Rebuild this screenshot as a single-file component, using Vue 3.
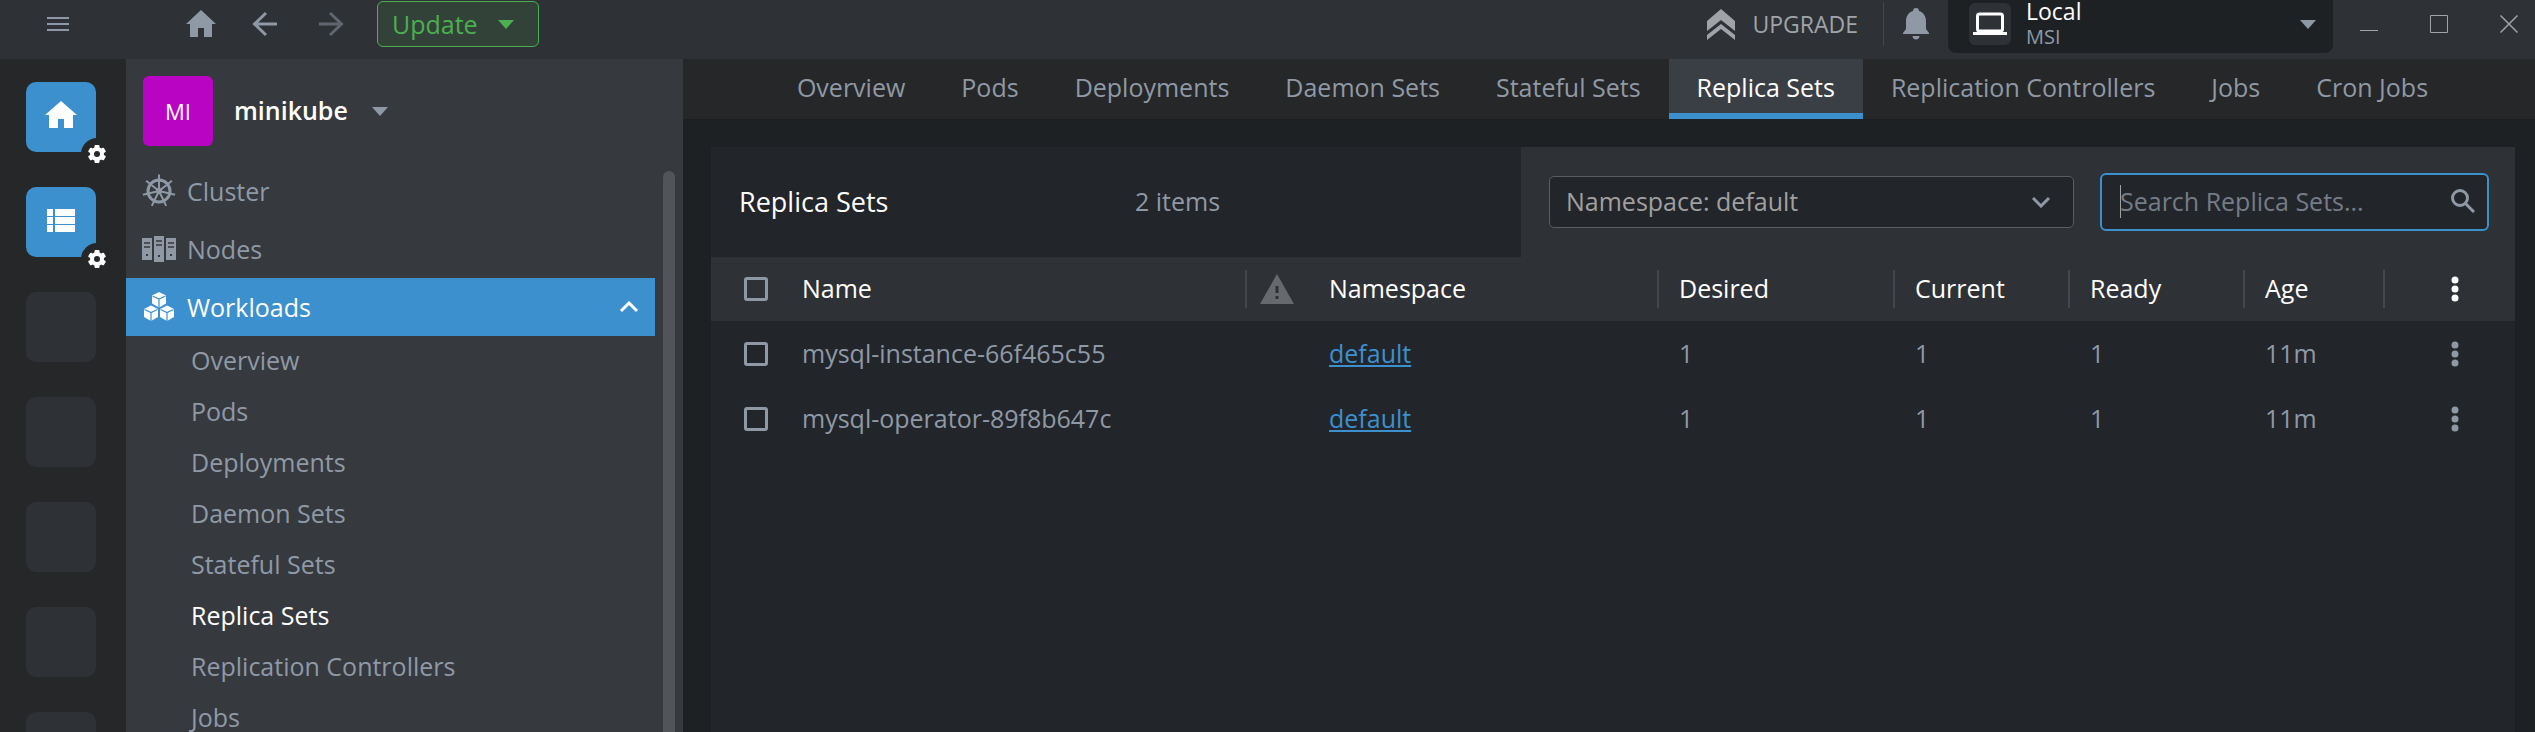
<script setup>
import { ref } from 'vue'

const query = ref('')
const namespace = ref('default')

const workloads = [
  'Overview',
  'Pods',
  'Deployments',
  'Daemon Sets',
  'Stateful Sets',
  'Replica Sets',
  'Replication Controllers',
  'Jobs',
  'Cron Jobs',
]
const active = 'Replica Sets'

const rows = [
  { name: 'mysql-instance-66f465c55', namespace: 'default', desired: 1, current: 1, ready: 1, age: '11m' },
  { name: 'mysql-operator-89f8b647c', namespace: 'default', desired: 1, current: 1, ready: 1, age: '11m' },
]

const spokes = Array.from({ length: 7 }, (_, i) => (i * 360) / 7)
const teeth = [0, 60, 120, 180, 240, 300]
</script>

<template>
  <div class="app">
    <header class="titlebar">
      <div class="bar-left">
        <button class="icon-btn menu-btn" aria-label="Menu">
          <svg width="22" height="16" viewBox="0 0 22 16"><path d="M0 2h22M0 8h22M0 14h22" stroke="currentColor" stroke-width="2" /></svg>
        </button>
        <button class="icon-btn home-btn" aria-label="Home">
          <svg width="32" height="28" viewBox="0 0 32 28"><path d="M16 0 1 14h4v13h8v-9h6v9h8V14h4z" fill="currentColor" /></svg>
        </button>
        <button class="icon-btn back-btn" aria-label="Back">
          <svg width="26" height="26" viewBox="0 0 26 26"><path d="M25 13H2M14 2 2.500 13 14 24" fill="none" stroke="currentColor" stroke-width="3" /></svg>
        </button>
        <button class="icon-btn forward-btn" aria-label="Forward" disabled>
          <svg width="26" height="26" viewBox="0 0 26 26"><path d="M1 13h23M12 2l11.500 11L12 24" fill="none" stroke="currentColor" stroke-width="3" /></svg>
        </button>
        <button class="update">
          Update
          <svg width="16" height="9" viewBox="0 0 16 9"><path d="M0 0h16L8 9z" fill="currentColor" /></svg>
        </button>
      </div>
      <div class="bar-right">
        <button class="upgrade">
          <svg width="30" height="32" viewBox="0 0 30 32">
            <path d="M15 1 29 13v10L15 12 1 23V13z M15 16l14 11v5L15 21 1 32v-5z" fill="currentColor" />
          </svg>
          UPGRADE
        </button>
        <button class="icon-btn bell" aria-label="Notifications">
          <svg width="26" height="32" viewBox="0 0 26 32">
            <path d="M13 0c2 0 3 1 3 3 4 1 7 5 7 10v8l3 4v1H0v-1l3-4v-8c0-5 3-9 7-10 0-2 1-3 3-3zM9.500 28h7c0 2-1.500 3.500-3.500 3.500S9.500 30 9.500 28z" fill="currentColor" />
          </svg>
        </button>
        <button class="space">
          <span class="space-icon">
            <svg width="34" height="24" viewBox="0 0 34 24">
              <rect x="4.500" y="2" width="25" height="17" rx="2" fill="none" stroke="#fff" stroke-width="3" />
              <path d="M0 20h34v3H0z" fill="#fff" />
            </svg>
          </span>
          <span class="space-text">
            <span class="space-name">Local</span>
            <span class="space-host">MSI</span>
          </span>
          <svg width="16" height="9" viewBox="0 0 16 9"><path d="M0 0h16L8 9z" fill="currentColor" /></svg>
        </button>
        <div class="window-controls">
          <button class="icon-btn" aria-label="Minimize">
            <svg width="18" height="18" viewBox="0 0 18 18"><path d="M0 15.500h18" stroke="currentColor" /></svg>
          </button>
          <button class="icon-btn" aria-label="Maximize">
            <svg width="18" height="18" viewBox="0 0 18 18"><path d="M.5.5h17v17H.5z" fill="none" stroke="currentColor" /></svg>
          </button>
          <button class="icon-btn" aria-label="Close">
            <svg width="18" height="18" viewBox="0 0 18 18"><path d="M.5.5l17 17M17.500.5l-17 17" stroke="currentColor" stroke-width="1.500" /></svg>
          </button>
        </div>
      </div>
    </header>

    <div class="body">
      <aside class="hotbar" aria-label="Hotbar">
        <div v-for="n in 7" :key="n" class="tile" :class="{ filled: n < 3 }">
          <svg v-if="n === 1" width="32" height="28" viewBox="0 0 32 28"><path d="M16 0 0 14h4v13h9v-9h6v9h9V14h4z" fill="#fff" /></svg>
          <svg v-if="n === 2" width="28" height="23" viewBox="0 0 28 23">
            <path d="M0 0h6v7H0zM8 0h20v7H8zM0 8h6v7H0zM8 8h20v7H8zM0 16h6v7H0zM8 16h20v7H8z" fill="#fff" />
          </svg>
          <span v-if="n < 3" class="gear">
            <svg width="18" height="18" viewBox="-9 -9 18 18">
              <rect v-for="a in teeth" :key="a" x="-2.500" y="-9" width="5" height="5" rx="1" fill="#fff" :transform="`rotate(${a})`" />
              <circle r="5" fill="none" stroke="#fff" stroke-width="4" />
            </svg>
          </span>
        </div>
      </aside>

      <nav class="sidebar" aria-label="Cluster">
        <button class="cluster-head">
          <span class="avatar">MI</span>
          <span class="cluster-name">minikube</span>
          <svg width="16" height="9" viewBox="0 0 16 9"><path d="M0 0h16L8 9z" fill="currentColor" /></svg>
        </button>
        <div class="scroll">
          <div class="tree">
            <a href="#" class="item">
              <svg width="34" height="34" viewBox="-17 -17 34 34">
                <circle r="11" fill="none" stroke="currentColor" stroke-width="3" />
                <circle r="3" fill="currentColor" />
                <path v-for="a in spokes" :key="a" d="M0 0V-16.500" stroke="currentColor" stroke-width="2" :transform="`rotate(${a})`" />
              </svg>
              Cluster
            </a>
            <a href="#" class="item">
              <svg width="34" height="26" viewBox="0 0 34 26">
                <path d="M0 2h10v22H0zM12 0h10v26H12zM24 2h10v22H24z" fill="currentColor" />
                <path d="M2 7h6M2 11h6M14 5h6M14 9h6M26 7h6M26 11h6" stroke="#36393e" stroke-width="1.500" />
                <path d="M4 18h2v2H4zM16 19h2v2h-2zM28 18h2v2h-2z" fill="#36393e" />
              </svg>
              Nodes
            </a>
            <a href="#" class="item open">
              <svg width="34" height="30" viewBox="-17 -15 34 30">
                <g v-for="(p, i) in [[0, -7.5], [-8, 6], [8, 6]]" :key="i" :transform="`translate(${p[0]} ${p[1]})`">
                  <path d="M0-7.500 7-4v8L0 8l-7-4v-8z" fill="#fff" />
                  <path d="M-6.500-3.500 0-.5l6.500-3M0-.5V8" fill="none" stroke="#3d90ce" stroke-width="1.200" />
                </g>
              </svg>
              Workloads
              <svg class="chevron" width="20" height="12" viewBox="0 0 20 12"><path d="M2 10l8-8 8 8" fill="none" stroke="#fff" stroke-width="3" /></svg>
            </a>
            <a v-for="w in workloads" :key="w" href="#" class="sub" :class="{ current: w === active }">{{ w }}</a>
          </div>
          <div class="scrollbar"></div>
        </div>
      </nav>

      <main class="main">
        <nav class="tabs" aria-label="Workloads">
          <a v-for="w in workloads" :key="w" href="#" class="tab" :class="{ current: w === active }">{{ w }}</a>
        </nav>
        <section class="panel">
          <div class="panel-head">
            <div class="panel-info">
              <h1>Replica Sets</h1>
              <span class="count">2 items</span>
            </div>
            <div class="filters">
              <div class="select-box">
                <select v-model="namespace" aria-label="Namespace">
                  <option value="default">Namespace: default</option>
                </select>
                <svg width="20" height="12" viewBox="0 0 20 12"><path d="M2 2l8 8 8-8" fill="none" stroke="currentColor" stroke-width="3" /></svg>
              </div>
              <label class="search">
                <span class="caret"></span>
                <input v-model="query" type="text" placeholder="Search Replica Sets..." aria-label="Search Replica Sets" />
                <svg width="24" height="24" viewBox="0 0 24 24">
                  <circle cx="9" cy="9" r="7.500" fill="none" stroke="currentColor" stroke-width="3" />
                  <path d="M14 14l9 9" stroke="currentColor" stroke-width="3" />
                </svg>
              </label>
            </div>
          </div>
          <table>
            <colgroup>
              <col class="c-check" />
              <col />
              <col class="c-warn" />
              <col class="c-ns" />
              <col class="c-desired" />
              <col class="c-num" />
              <col class="c-num" />
              <col class="c-age" />
              <col class="c-menu" />
            </colgroup>
            <thead>
              <tr>
                <th class="check"><input type="checkbox" aria-label="Select all" /></th>
                <th class="line">Name</th>
                <th class="warn">
                  <svg width="34" height="30" viewBox="0 0 34 30">
                    <path d="M17 0 34 30H0z" fill="#66696d" />
                    <path d="M15.500 12h3v7h-3zM15.500 22h3v3h-3z" fill="#2e3136" />
                  </svg>
                </th>
                <th class="line">Namespace</th>
                <th class="line">Desired</th>
                <th class="line">Current</th>
                <th class="line">Ready</th>
                <th class="line">Age</th>
                <th class="menu">
                  <button class="icon-btn" aria-label="Columns">
                    <svg width="8" height="26" viewBox="0 0 8 26"><path d="M4 4h0M4 13h0M4 22h0" stroke="currentColor" stroke-width="7" stroke-linecap="round" /></svg>
                  </button>
                </th>
              </tr>
            </thead>
            <tbody>
              <tr v-for="r in rows" :key="r.name">
                <td class="check"><input type="checkbox" :aria-label="`Select ${r.name}`" /></td>
                <td>{{ r.name }}</td>
                <td></td>
                <td><a href="#">{{ r.namespace }}</a></td>
                <td>{{ r.desired }}</td>
                <td>{{ r.current }}</td>
                <td>{{ r.ready }}</td>
                <td>{{ r.age }}</td>
                <td class="menu">
                  <button class="icon-btn" :aria-label="`Actions for ${r.name}`">
                    <svg width="8" height="26" viewBox="0 0 8 26"><path d="M4 4h0M4 13h0M4 22h0" stroke="currentColor" stroke-width="7" stroke-linecap="round" /></svg>
                  </button>
                </td>
              </tr>
            </tbody>
          </table>
        </section>
      </main>
    </div>
  </div>
</template>

<style>
body {
  margin: 0;
  background: #1e2124;
}
</style>

<style scoped>
.app {
  height: 100vh;
  display: flex;
  flex-direction: column;
  overflow: hidden;
  background: #1e2124;
  color: #8f99a6;
  font-family: 'Open Sans', 'Noto Sans', sans-serif;
  font-size: 25px;
  line-height: 34px;
}
.app *,
.app *::before {
  box-sizing: border-box;
}
button,
input,
select {
  font: inherit;
  color: inherit;
  margin: 0;
  padding: 0;
  border: 0;
  background: none;
}
button {
  cursor: pointer;
}
a {
  color: inherit;
  text-decoration: none;
}
svg {
  display: block;
  flex: none;
}
.icon-btn {
  display: flex;
  align-items: center;
  justify-content: center;
}

/* Title bar */
.titlebar {
  flex: none;
  height: 59px;
  display: flex;
  justify-content: space-between;
  background: #2e3136;
}
.bar-left,
.bar-right {
  height: 48px;
  display: flex;
  align-items: center;
}
.menu-btn {
  margin-left: 47px;
}
.home-btn {
  margin-left: 116px;
}
.back-btn {
  margin-left: 35px;
}
.forward-btn {
  margin-left: 40px;
  color: #60666f;
}
.update {
  margin-left: 33px;
  height: 46px;
  width: 162px;
  padding: 0 24px 0 14px;
  display: flex;
  align-items: center;
  justify-content: space-between;
  border: 1px solid #4caf50;
  border-radius: 6px;
  background: #334239;
  color: #4caf50;
}
.upgrade {
  height: 44px;
  padding-right: 25px;
  display: flex;
  align-items: center;
  gap: 16px;
  border-right: 1px solid #44474d;
  color: #a0a4a9;
  font-size: 23px;
}
.bell {
  margin: 0 19px;
}
.space {
  align-self: flex-start;
  width: 385px;
  height: 53px;
  padding: 0 17px 5px 21px;
  display: flex;
  align-items: center;
  border-radius: 0 0 8px 8px;
  background: #1e2124;
  text-align: left;
}
.space-icon {
  width: 42px;
  height: 42px;
  display: flex;
  align-items: center;
  justify-content: center;
  border-radius: 6px;
  background: #2e3136;
}
.space-text {
  flex: 1;
  padding-left: 15px;
  display: flex;
  flex-direction: column;
  line-height: 25px;
}
.space-name {
  color: #fff;
  font-size: 23px;
}
.space-host {
  font-size: 20px;
}
.window-controls {
  display: flex;
  gap: 52px;
  padding: 0 17px 0 27px;
  color: #a0a4a9;
}

/* Hotbar */
.body {
  flex: 1;
  min-height: 0;
  display: flex;
}
.hotbar {
  flex: none;
  width: 126px;
  padding: 23px 0 0 26px;
  display: flex;
  flex-direction: column;
  gap: 35px;
  background: #262728;
}
.tile {
  position: relative;
  flex: none;
  width: 70px;
  height: 70px;
  padding-bottom: 4px;
  display: flex;
  align-items: center;
  justify-content: center;
  border-radius: 10px;
  background: #2e3136;
}
.tile.filled {
  background: #3d90ce;
}
.gear {
  position: absolute;
  right: -17px;
  bottom: -18px;
  width: 32px;
  height: 32px;
  display: flex;
  align-items: center;
  justify-content: center;
  border-radius: 50%;
  background: #262728;
}

/* Sidebar */
.sidebar {
  flex: none;
  width: 557px;
  display: flex;
  flex-direction: column;
  background: #36393e;
}
.cluster-head {
  flex: none;
  padding: 17px 17px 16px;
  display: flex;
  align-items: center;
}
.avatar {
  width: 70px;
  height: 70px;
  margin-right: 21px;
  border-radius: 6px;
  background: #b905c3;
  color: #fff;
  font-size: 22px;
  line-height: 70px;
}
.cluster-name {
  margin-right: 24px;
  padding-bottom: 3px;
  color: #fff;
  font-weight: 600;
}
.scroll {
  flex: 1;
  min-height: 0;
  display: flex;
  gap: 8px;
  padding-right: 8px;
}
.tree {
  flex: 1;
  overflow: hidden;
}
.item {
  height: 58px;
  padding: 0 16px;
  display: flex;
  align-items: center;
  gap: 11px;
}
.item.open {
  background: #3d90ce;
  color: #fff;
  font-weight: 500;
}
.chevron {
  margin-left: auto;
}
.sub {
  display: block;
  padding: 0 0 3px 65px;
  line-height: 48px;
}
.sub.current {
  color: #fff;
  font-weight: 500;
}
.scrollbar {
  width: 12px;
  margin-top: 9px;
  border-radius: 6px 6px 0 0;
  background: #525458;
}

/* Main area */
.main {
  flex: 1;
  min-width: 0;
  display: flex;
  flex-direction: column;
}
.tabs {
  flex: none;
  height: 60px;
  padding-left: 7px;
  display: flex;
  justify-content: center;
  background: #262728;
}
.tab {
  padding: 0 28px;
  border-bottom: 6px solid transparent;
  line-height: 57px;
  white-space: nowrap;
}
.tab.current {
  border-color: #3d90ce;
  background: #3a3f46;
  color: #fff;
  font-weight: 500;
}
.panel {
  flex: 1;
  margin: 28px 20px 0 28px;
  background: #22252a;
}
.panel-head {
  height: 110px;
  display: flex;
}
.panel-info {
  flex: 1;
  padding: 0 28px;
  display: grid;
  grid-template-columns: 396px 1fr;
  align-items: center;
}
h1 {
  margin: 0;
  color: #fff;
  font-size: 27px;
  font-weight: 400;
}
.count {
  padding-bottom: 2px;
}
.filters {
  padding: 0 26px 0 28px;
  display: flex;
  align-items: center;
  gap: 26px;
  background: #2e3136;
}
.select-box {
  width: 525px;
  height: 52px;
  padding-right: 22px;
  display: grid;
  align-items: center;
  border: 1px solid #5a5d62;
  border-radius: 5px;
  background: #22252a;
}
.select-box select {
  grid-area: 1 / 1;
  height: 50px;
  padding: 0 0 2px 16px;
  appearance: none;
  color: #a0a0a0;
}
.select-box svg {
  grid-area: 1 / 1;
  justify-self: end;
  pointer-events: none;
}
.search {
  width: 389px;
  height: 58px;
  padding: 0 12px 2px 18px;
  display: flex;
  align-items: center;
  border: 2px solid #3d90ce;
  border-radius: 6px;
  background: #22252a;
}
.search .caret {
  width: 1px;
  height: 33px;
  margin-right: -1px;
  background: #a0a0a0;
}
.search input {
  flex: 1;
  min-width: 0;
  outline: 0;
}
.search input::placeholder {
  color: #757c87;
  opacity: 1;
}

/* Table */
table {
  width: 100%;
  table-layout: fixed;
  border-collapse: collapse;
}
.c-check {
  width: 71px;
}
.c-warn {
  width: 62px;
}
.c-ns {
  width: 350px;
}
.c-desired {
  width: 236px;
}
.c-num {
  width: 175px;
}
.c-age {
  width: 140px;
}
.c-menu {
  width: 130px;
}
thead {
  background: #2e3136;
}
th,
td {
  height: 65px;
  padding: 0 0 2px 20px;
  text-align: left;
}
th {
  height: 64px;
  color: #fff;
  font-weight: 500;
}
th.line {
  background: linear-gradient(#44474c, #44474c) right center / 2px 38px no-repeat;
}
th.warn {
  padding: 0 0 0 13px;
}
th.check,
td.check {
  padding: 0 0 0 33px;
}
th.menu,
td.menu {
  padding: 0 0 0 66px;
}
td a {
  color: #3d90ce;
  text-decoration: underline;
}
.check input {
  display: block;
  width: 24px;
  height: 24px;
  appearance: none;
  border: 3px solid #8f99a6;
  border-radius: 3px;
}
</style>
